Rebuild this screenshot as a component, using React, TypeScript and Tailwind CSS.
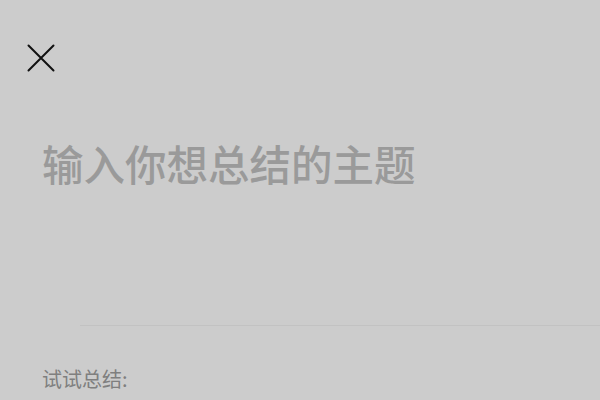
import React from 'react';

const CloseIcon = () => (
  <svg width="28" height="28" viewBox="0 0 28 28" fill="none" stroke="#111" strokeWidth="2" strokeLinecap="round">
    <path d="M1.5 1.5 L26.5 26.5 M26.5 1.5 L1.5 26.5" />
  </svg>
);

export default function App() {
  return (
    <div
      className="w-[600px] h-[400px] overflow-hidden bg-[#cccccc] flex flex-col"
      style={{ fontFamily: '"Noto Sans CJK SC", "Noto Sans", sans-serif' }}
    >
      {/* 顶部关闭按钮 */}
      <div className="pt-[44px] pl-[27px] h-[73px]">
        <CloseIcon />
      </div>

      {/* 输入区域 */}
      <div className="pl-[42px] pt-[66px] h-[252px]">
        <div className="text-[41.5px] leading-[48px] font-medium text-[#9a9a9a]">输入你想总结的主题</div>
      </div>

      <div className="ml-[80px] h-px bg-[#c2c2c2]"></div>

      <div className="pl-[42px] pt-[40px] text-[20px] leading-[26px] text-[#7f7f7f]">试试总结:</div>
    </div>
  );
}
